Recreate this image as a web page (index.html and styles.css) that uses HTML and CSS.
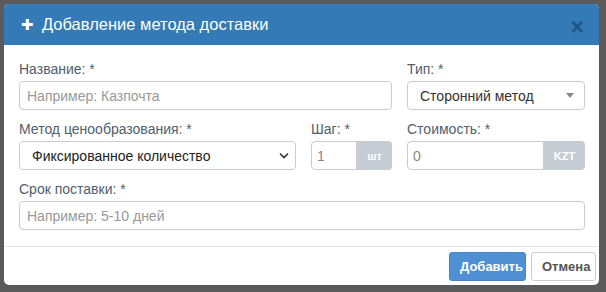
FILE: index.html
```html
<!DOCTYPE html>
<html lang="ru">
<head>
    <meta charset="UTF-8">
    <title>Добавление метода доставки</title>
    <link rel="stylesheet" href="styles.css">
</head>
<body>
    <div class="modal">
        <div class="modal-header">
            <h4 class="modal-title"><span class="plus">&#10010;</span> Добавление метода доставки</h4>
            <span class="close">&times;</span>
        </div>

        <div class="modal-body">
            <div class="form-grid">
                <div class="form-group span-2">
                    <label>Название: *</label>
                    <input class="form-control" type="text" placeholder="Например: Казпочта">
                </div>
                <div class="form-group">
                    <label>Тип: *</label>
                    <div class="fake-select">
                        <span>Сторонний метод</span>
                        <span class="caret"></span>
                    </div>
                </div>

                <div class="form-group">
                    <label>Метод ценообразования: *</label>
                    <div class="native-select">
                        <span>Фиксированное количество</span>
                        <svg width="10" height="7" viewBox="0 0 10 7"><path d="M1 1.5 L5 5.5 L9 1.5" fill="none" stroke="#333" stroke-width="1.6"/></svg>
                    </div>
                </div>
                <div class="form-group">
                    <label>Шаг: *</label>
                    <div class="input-group">
                        <input class="form-control" type="text" value="1">
                        <span class="addon">шт</span>
                    </div>
                </div>
                <div class="form-group">
                    <label>Стоимость: *</label>
                    <div class="input-group">
                        <input class="form-control" type="text" value="0">
                        <span class="addon addon-wide">KZT</span>
                    </div>
                </div>

                <div class="form-group span-3">
                    <label>Срок поставки: *</label>
                    <input class="form-control" type="text" placeholder="Например: 5-10 дней">
                </div>
            </div>
        </div>

        <div class="modal-footer">
            <button class="btn btn-primary">Добавить</button>
            <button class="btn btn-default">Отмена</button>
        </div>
    </div>
</body>
</html>
```

FILE: styles.css
```css
body { margin: 0; background: #5a5a5a; font-family: "Liberation Sans", Arial, sans-serif; font-size: 14px; color: #333; }
.modal { margin: 4px 7px 7px 4px; background: #fff; border-radius: 5px; overflow: hidden; height: 281px; display: flex; flex-direction: column; }
.modal-header { background: #337ab7; height: 41px; display: flex; align-items: center; justify-content: space-between; padding: 0 15px 0 17px; box-sizing: border-box; }
.modal-title { margin: 0; color: #fff; font-size: 16.5px; font-weight: normal; display: flex; align-items: center; }
.plus { font-size: 15px; margin-right: 8px; }
.close { color: #1f4f7a; font-size: 23px; font-weight: bold; line-height: 1; margin-top: 6px; opacity: 0.85; }
.modal-body { padding: 15px 14px 16px 15px; }
.form-grid { display: grid; grid-template-columns: 1fr 81px 178px; column-gap: 15px; row-gap: 10px; }
.span-2 { grid-column: span 2; }
.span-3 { grid-column: span 3; }
label { display: block; color: #50606f; line-height: 18px; margin-bottom: 3px; }
.form-control { display: block; width: 100%; box-sizing: border-box; height: 29px; border: 1px solid #ccc; border-radius: 4px; padding: 0 7px; font-family: inherit; font-size: 14px; color: #888; background: #fff; }
.form-control::placeholder { color: #999; }
.fake-select { height: 27px; border: 1px solid #ccc; border-radius: 4px; display: flex; align-items: center; justify-content: space-between; padding: 0 10px 0 12px; color: #333; font-size: 14px; }
.caret { width: 0; height: 0; border-left: 4px solid transparent; border-right: 4px solid transparent; border-top: 5px solid #888; }
.native-select { height: 29px; box-sizing: border-box; border: 1px solid #ccc; border-radius: 4px; display: flex; align-items: center; justify-content: space-between; padding: 0 6px 0 12px; color: #222; }
.input-group { display: flex; }
.input-group .form-control { border-radius: 4px 0 0 4px; flex: 1; min-width: 0; padding: 0 5px; }
.addon { width: 35px; height: 29px; background: #c6ccd4; color: #fff; font-size: 11px; font-weight: bold; display: flex; align-items: center; justify-content: center; border-radius: 0 4px 4px 0; }
.addon-wide { width: 41px; }
.modal-footer { border-top: 1px solid #e5e5e5; padding: 5px 3px 4px; display: flex; justify-content: flex-end; gap: 5px; margin-top: auto; }
.btn { height: 29px; border-radius: 3px; font-family: inherit; font-size: 13px; font-weight: bold; padding: 0 10px; }
.btn-primary { background: #4f8fd4; border: 1px solid #4785c8; color: #fff; width: 77px; }
.btn-default { background: #fff; border: 1px solid #ccc; color: #555; width: 65px; }
```
